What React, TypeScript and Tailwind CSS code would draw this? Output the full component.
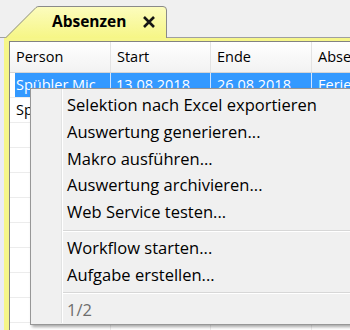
export default function App() {
  const rows: { cells: string[]; selected?: boolean }[] = [
    { cells: ["Spübler Michael", "13.08.2018", "26.08.2018", "Ferien"], selected: true },
    { cells: ["Spübler Michael", "01.10.2018", "05.10.2018", "Ferien"] },
    { cells: ["", "", "", ""] },
    { cells: ["", "", "", ""] },
    { cells: ["", "", "", ""] },
    { cells: ["", "", "", ""] },
    { cells: ["", "", "", ""] },
    { cells: ["", "", "", ""] },
    { cells: ["", "", "", ""] },
    { cells: ["", "", "", ""] },
    { cells: ["", "", "", ""] },
  ];

  const items: { label: string; h: string }[] = [
    { label: "Selektion nach Excel exportieren", h: "h-[27px]" },
    { label: "Auswertung generieren...", h: "h-[27px]" },
    { label: "Makro ausführen...", h: "h-[26px]" },
    { label: "Auswertung archivieren...", h: "h-[27px]" },
    { label: "Web Service testen...", h: "h-[26px]" },
  ];

  const cellW = ["w-[96px]", "w-[100px]", "w-[101px]", "w-[120px]"];
  const headW = ["w-[101px]", "w-[100px]", "w-[101px]", "w-[120px]"];
  const cellPad = ["pl-[1px]", "pl-[5px]", "pl-[6px]", "pl-[6px]"];

  return (
    <div className="relative w-[350px] h-[330px] overflow-hidden bg-[#f0f0f0] flex flex-col font-['Open_Sans','Noto_Sans',sans-serif] text-black select-none">
      {/* Tab strip */}
      <div className="h-[38px] shrink-0 flex items-end border-b border-[#a0a0a0] pl-[5px]">
        <div className="relative w-[162px] h-[32px] -mb-px flex items-center">
          <svg className="absolute inset-0" width="162" height="32" viewBox="0 0 162 32">
            <defs>
              <linearGradient id="tabg" x1="0" y1="0" x2="0" y2="1">
                <stop offset="0" stopColor="#fcfcbe" />
                <stop offset="1" stopColor="#f6f686" />
              </linearGradient>
            </defs>
            <path d="M0 32 L31 1 Q32 0.5 34 0.5 L158 0.5 Q161.5 0.5 161.5 4 L161.5 32 Z" fill="url(#tabg)" />
            <path d="M0.5 32 L31 1.5 Q32 0.5 34 0.5 L158 0.5 Q161.5 0.5 161.5 4 L161.5 32" fill="none" stroke="#8a8a8a" />
          </svg>
          <span className="relative pl-[47px] text-[15.5px] font-bold leading-none">Absenzen</span>
          <svg className="relative ml-[17px]" width="12" height="12" viewBox="0 0 12 12">
            <path d="M1 1 L11 11 M11 1 L1 11" stroke="#151515" strokeWidth="2.6" />
          </svg>
        </div>
      </div>

      {/* Body */}
      <div className="flex-1 flex min-h-0">
        <div className="w-[4px] shrink-0 bg-[#ececf6]" />
        <div className="flex-1 flex bg-[#f6f68a] pt-[3px] pl-[5px] min-w-0">
          <div className="flex-1 flex flex-col bg-white border-l border-t border-[#828282] min-w-0 overflow-hidden">
            {/* Header */}
            <div className="h-[31px] shrink-0 flex border-b border-[#d5d5d5] bg-linear-to-b from-white to-[#f2f2f2] text-[14.5px]">
              {["Person", "Start", "Ende", "Absenz"].map((h, i) => (
                <div
                  key={h}
                  className={`${headW[i]} shrink-0 flex items-center pl-[6px] border-r border-[#e3e3e3] whitespace-nowrap overflow-hidden`}
                >
                  {h}
                </div>
              ))}
            </div>
            {/* Rows */}
            {rows.map((r, ri) => (
              <div key={ri} className="h-[25px] shrink-0 flex border-b border-[#ececec] text-[14.5px]">
                <div className="w-[5px] shrink-0" />
                {r.cells.map((c, ci) => (
                  <div
                    key={ci}
                    className={`${cellW[ci]} ${cellPad[ci]} shrink-0 flex items-center whitespace-nowrap overflow-hidden border-r ${
                      r.selected ? "bg-[#3399ff] text-white border-[#cfe5ff]" : "border-[#ececec]"
                    }`}
                  >
                    <span className="block overflow-hidden text-ellipsis">{c}</span>
                  </div>
                ))}
              </div>
            ))}
          </div>
        </div>
      </div>

      {/* Context menu */}
      <div className="absolute left-[30px] top-[88px] w-[330px] flex bg-[#f0f0f0] border border-[#979797] shadow-[2px_2px_3px_rgba(0,0,0,0.35)] pb-[1px]">
        <div className="w-[31px] shrink-0 border-r border-[#e2e3e3]" />
        <div className="flex-1 flex flex-col pt-[3px] border-l border-white text-[16.5px] leading-none">
          {items.map((it) => (
            <div key={it.label} className={`${it.h} flex items-center pl-[4px] whitespace-nowrap`}>
              {it.label}
            </div>
          ))}
          <div className="h-[10px] pt-[5px]">
            <div className="h-px bg-[#d7d7d7]" />
            <div className="h-px bg-white" />
          </div>
          <div className="h-[27px] flex items-center pl-[4px] whitespace-nowrap">Workflow starten...</div>
          <div className="h-[27px] flex items-center pl-[4px] whitespace-nowrap">Aufgabe erstellen...</div>
          <div className="h-[8px] pt-[3px]">
            <div className="h-px bg-[#d7d7d7]" />
            <div className="h-px bg-white" />
          </div>
          <div className="h-[26px] flex items-center pl-[4px] whitespace-nowrap text-[#6d6d6d]">1/2</div>
        </div>
      </div>
    </div>
  );
}
